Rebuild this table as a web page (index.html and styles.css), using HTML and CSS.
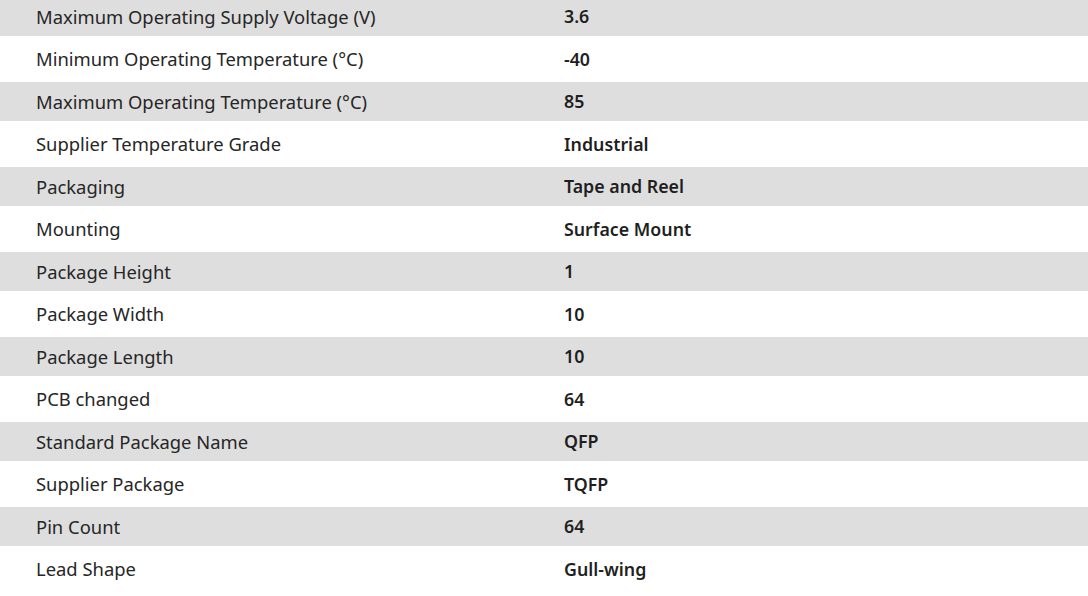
FILE: index.html
```html
<!DOCTYPE html>
<html>
<head>
<meta charset="utf-8">
<link rel="stylesheet" href="styles.css">
</head>
<body>
<div class="specs">
  <div class="row odd"><div class="label">Maximum Operating Supply Voltage (V)</div><div class="value">3.6</div></div>
  <div class="row"><div class="label">Minimum Operating Temperature (°C)</div><div class="value">-40</div></div>
  <div class="row odd"><div class="label">Maximum Operating Temperature (°C)</div><div class="value">85</div></div>
  <div class="row"><div class="label">Supplier Temperature Grade</div><div class="value">Industrial</div></div>
  <div class="row odd"><div class="label">Packaging</div><div class="value">Tape and Reel</div></div>
  <div class="row"><div class="label">Mounting</div><div class="value">Surface Mount</div></div>
  <div class="row odd"><div class="label">Package Height</div><div class="value">1</div></div>
  <div class="row"><div class="label">Package Width</div><div class="value">10</div></div>
  <div class="row odd"><div class="label">Package Length</div><div class="value">10</div></div>
  <div class="row"><div class="label">PCB changed</div><div class="value">64</div></div>
  <div class="row odd"><div class="label">Standard Package Name</div><div class="value">QFP</div></div>
  <div class="row"><div class="label">Supplier Package</div><div class="value">TQFP</div></div>
  <div class="row odd"><div class="label">Pin Count</div><div class="value">64</div></div>
  <div class="row"><div class="label">Lead Shape</div><div class="value">Gull-wing</div></div>
</div>
</body>
</html>
```
FILE: styles.css
```css
html, body {
  margin: 0;
  padding: 0;
  background: #ffffff;
  overflow: hidden;
}
body {
  font-family: "Noto Sans", "Open Sans", sans-serif;
  font-size: 18.4px;
  color: #262626;
}
.specs {
  display: flex;
  flex-direction: column;
  margin-top: -3px;
}
.row {
  display: grid;
  grid-template-columns: 564px 1fr;
  align-items: center;
  height: 46px;
  background: #ffffff;
}
.row.odd {
  height: 39px;
  background: #dedede;
}
.label {
  padding-left: 36px;
  padding-bottom: 1px;
}
.value {
  font-size: 17.8px;
  font-weight: 600;
  color: #1f1f1f;
  padding-bottom: 1px;
}
```
